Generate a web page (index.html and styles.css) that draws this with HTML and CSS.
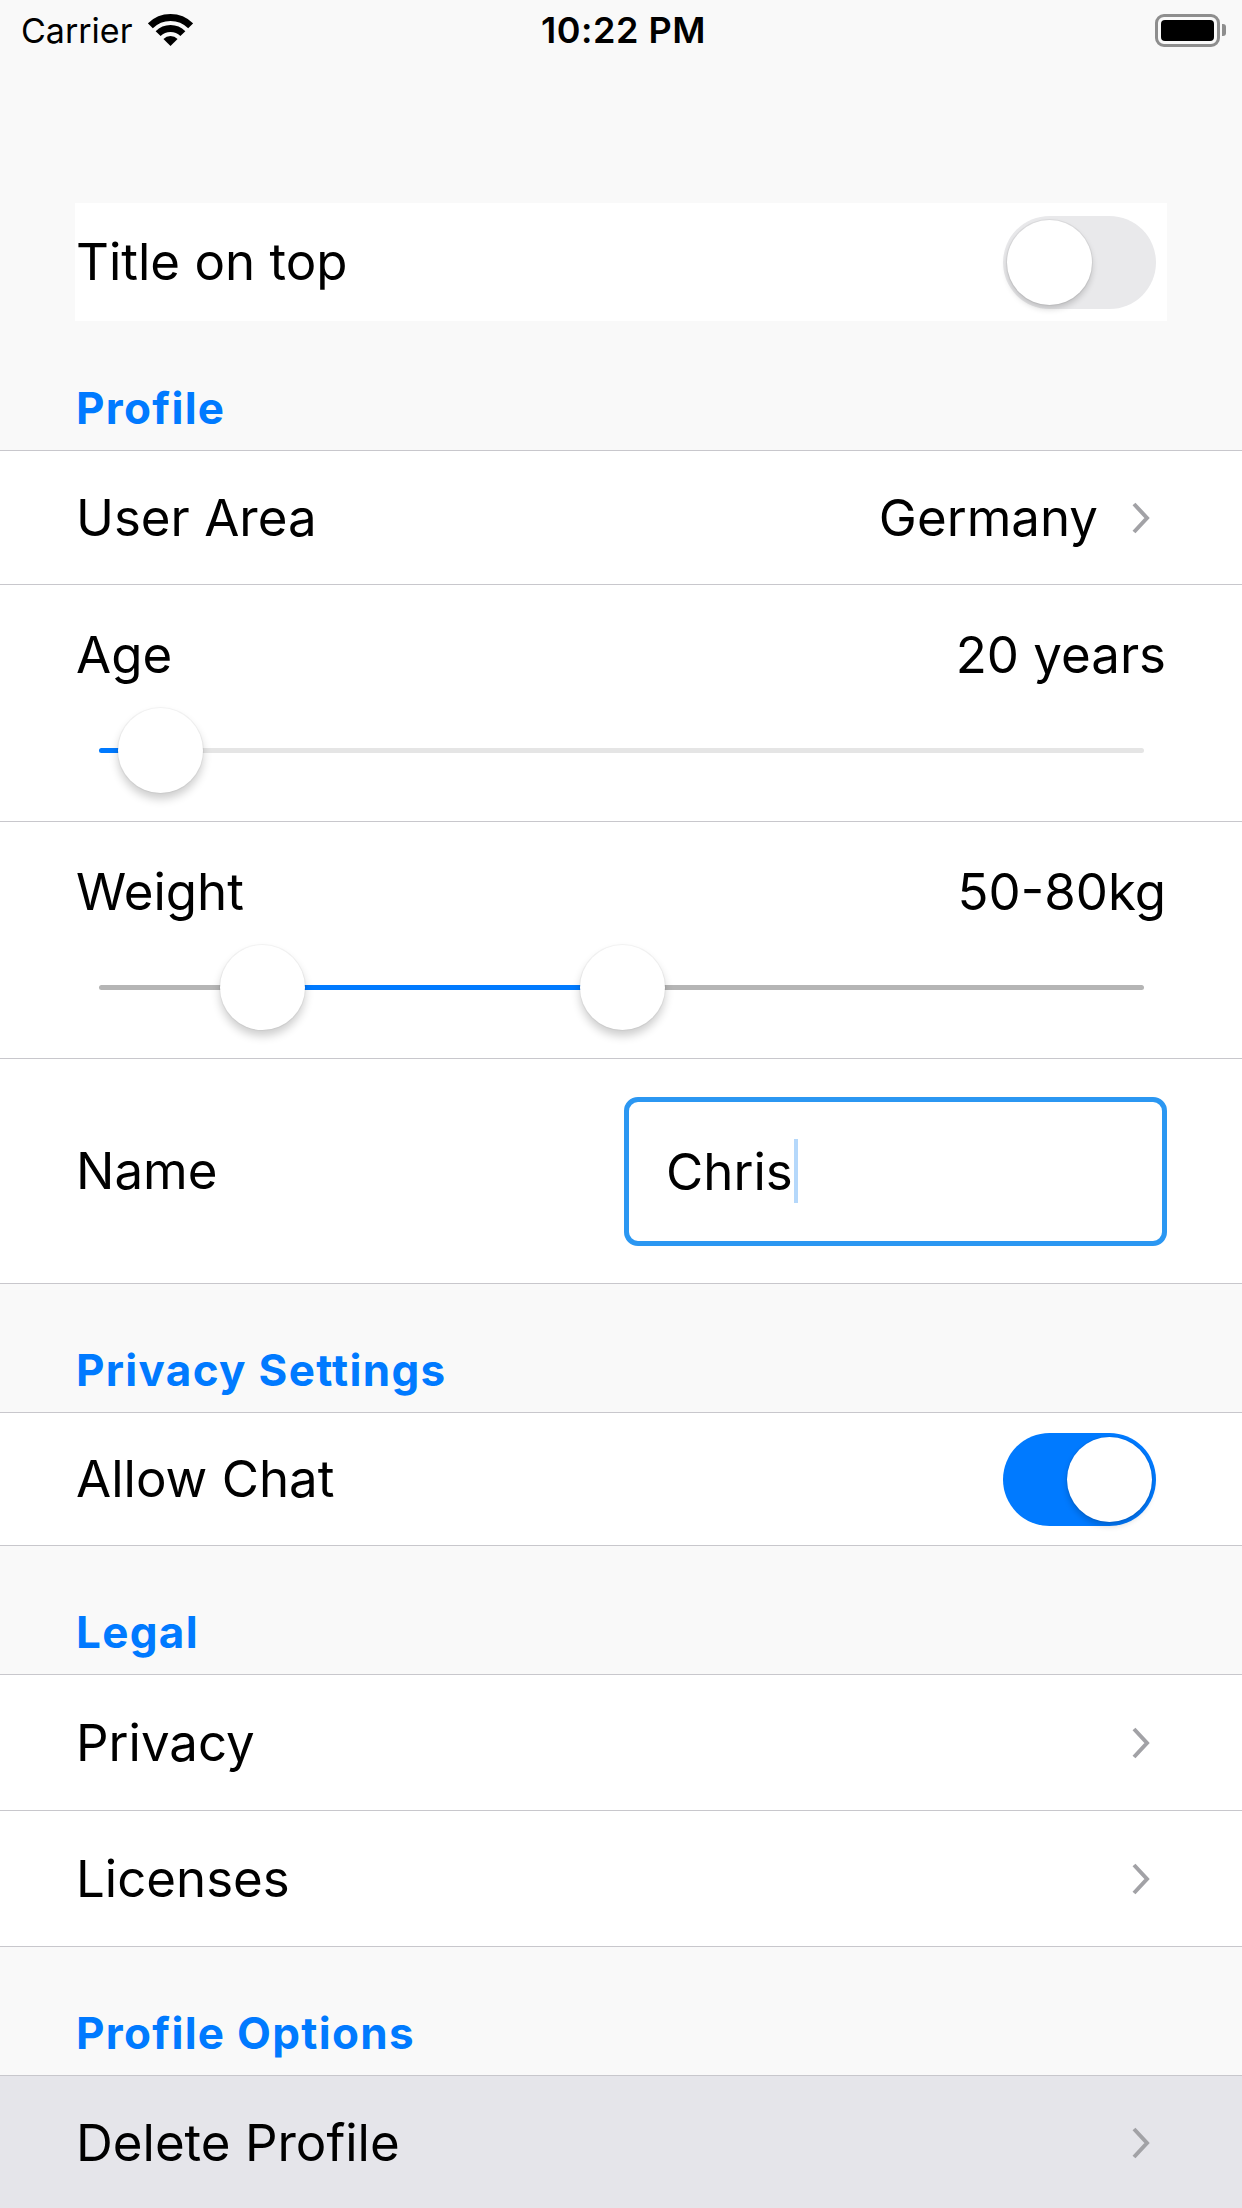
FILE: index.html
```html
<!DOCTYPE html>
<html lang="en">
<head>
    <meta charset="UTF-8">
    <meta name="viewport" content="width=device-width, initial-scale=1.0">
    <title>Settings</title>
    <link rel="stylesheet" href="styles.css">
</head>
<body>
    <div class="status">
        <div class="status-left">
            Carrier
            <svg class="wifi" width="45" height="33" viewBox="0 0 45 33">
                <path d="M2.35 11.85 A28.5 28.5 0 0 1 42.65 11.85" fill="none" stroke="#000" stroke-width="7"/>
                <path d="M10.13 19.63 A17.5 17.5 0 0 1 34.87 19.63" fill="none" stroke="#000" stroke-width="7"/>
                <path d="M22.5 32 L15.43 24.93 A10 10 0 0 1 29.57 24.93 Z" fill="#000"/>
            </svg>
        </div>
        <div class="status-time">10:22 PM</div>
        <div class="status-right">
            <div class="battery"><span class="battery-fill"></span></div>
            <span class="battery-nub"></span>
        </div>
    </div>

    <div class="card">
        <span class="label">Title on top</span>
        <span class="switch"><span class="knob"></span></span>
    </div>

    <div class="section-head first">Profile</div>
    <div class="row">
        <span class="label">User Area</span>
        <span class="value">Germany</span>
        <svg class="chevron" width="22" height="34" viewBox="0 0 22 34">
            <polyline points="4,3 17,17 4,31" fill="none" stroke="#a2a2a6" stroke-width="4"/>
        </svg>
    </div>

    <div class="slider-row">
        <div class="slider-head">
            <span class="label">Age</span>
            <span class="value">20 years</span>
        </div>
        <div class="track-wrap">
            <div class="track light"></div>
            <div class="fill" style="left: 0; width: 5.8%;"></div>
            <div class="thumb" style="left: 5.8%;"></div>
        </div>
    </div>

    <div class="slider-row">
        <div class="slider-head">
            <span class="label">Weight</span>
            <span class="value">50-80kg</span>
        </div>
        <div class="track-wrap">
            <div class="track"></div>
            <div class="fill" style="left: 15.6%; width: 34.4%;"></div>
            <div class="thumb" style="left: 15.6%;"></div>
            <div class="thumb" style="left: 50%;"></div>
        </div>
    </div>

    <div class="row name-row">
        <span class="label">Name</span>
        <div class="field">Chris<span class="caret"></span></div>
    </div>

    <div class="section-head">Privacy Settings</div>
    <div class="row short">
        <span class="label">Allow Chat</span>
        <span class="switch on"><span class="knob"></span></span>
    </div>

    <div class="section-head">Legal</div>
    <div class="row tall">
        <span class="label">Privacy</span>
        <svg class="chevron" width="22" height="34" viewBox="0 0 22 34">
            <polyline points="4,3 17,17 4,31" fill="none" stroke="#a2a2a6" stroke-width="4"/>
        </svg>
    </div>
    <div class="row tall">
        <span class="label">Licenses</span>
        <svg class="chevron" width="22" height="34" viewBox="0 0 22 34">
            <polyline points="4,3 17,17 4,31" fill="none" stroke="#a2a2a6" stroke-width="4"/>
        </svg>
    </div>

    <div class="section-head">Profile Options</div>
    <div class="row pressed">
        <span class="label">Delete Profile</span>
        <svg class="chevron" width="22" height="34" viewBox="0 0 22 34">
            <polyline points="4,3 17,17 4,31" fill="none" stroke="#a2a2a6" stroke-width="4"/>
        </svg>
    </div>
</body>
</html>
```

FILE: styles.css
```css
body {
    margin: 0;
    background: #f9f9f9;
    font-family: Inter, "Noto Sans", sans-serif;
    color: #000;
    font-size: 51px;
}
.status {
    height: 60px;
    display: grid;
    grid-template-columns: 1fr auto 1fr;
    align-items: center;
    padding: 0 16px 0 21px;
    font-size: 34px;
}
.status-left {
    display: flex;
    align-items: center;
    gap: 16px;
}
.status-time {
    font-size: 36px;
    font-weight: 600;
    letter-spacing: 0.5px;
}
.status-right {
    display: flex;
    align-items: center;
    justify-content: flex-end;
}
.battery {
    width: 65px;
    height: 33px;
    box-sizing: border-box;
    border: 3px solid #8e8e8e;
    border-radius: 9px;
    padding: 3px;
}
.battery-fill {
    display: block;
    height: 100%;
    background: #000;
    border-radius: 4px;
}
.battery-nub {
    width: 4px;
    height: 12px;
    margin-left: 2px;
    background: #8e8e8e;
    border-radius: 0 3px 3px 0;
}
.card {
    margin: 143px 75px 0;
    height: 118px;
    background: #fff;
    display: flex;
    align-items: center;
    justify-content: space-between;
    padding: 0 11px 0 1px;
}
.label {
    line-height: 60px;
}
.value {
    line-height: 60px;
}
.switch {
    position: relative;
    width: 153px;
    height: 93px;
    border-radius: 47px;
    background: #e9e9eb;
    flex-shrink: 0;
}
.switch .knob {
    position: absolute;
    top: 4px;
    left: 4px;
    width: 85px;
    height: 85px;
    border-radius: 50%;
    background: #fff;
    box-shadow: 0 4px 6px rgba(0, 0, 0, 0.18), 0 0 0 1px rgba(0, 0, 0, 0.05);
}
.switch.on {
    background: #007aff;
}
.switch.on .knob {
    left: 64px;
}
.section-head {
    height: 50px;
    padding: 61px 76px 17px 76px;
    line-height: 50px;
    font-size: 44px;
    font-weight: 700;
    letter-spacing: 1.3px;
    color: #007aff;
    border-bottom: 1px solid #c8c7cc;
}
.section-head.first {
    padding-top: 62px;
}
.row {
    height: 133px;
    display: flex;
    align-items: center;
    padding: 0 76px;
    background: #fff;
    border-bottom: 1px solid #c8c7cc;
}
.row.short {
    height: 132px;
}
.row.tall {
    height: 135px;
}
.row .label {
    flex: 1;
}
.row .switch {
    margin-right: 10px;
}
.chevron {
    margin-left: 32px;
    margin-right: 14px;
}
.row .label + .chevron {
    margin-left: 0;
}
.slider-row {
    height: 237px;
    box-sizing: border-box;
    padding: 0 76px;
    background: #fff;
    border-bottom: 1px solid #c8c7cc;
}
.slider-head {
    display: flex;
    justify-content: space-between;
    padding-top: 40px;
}
.track-wrap {
    position: relative;
    height: 90px;
    margin: 21px 22px 0 23px;
}
.track {
    position: absolute;
    left: 0;
    right: 0;
    top: 42px;
    height: 5px;
    border-radius: 3px;
    background: #b5b5b5;
}
.track.light {
    background: #e5e5e5;
}
.fill {
    position: absolute;
    top: 42px;
    height: 5px;
    border-radius: 3px;
    background: #007aff;
}
.thumb {
    position: absolute;
    top: 2px;
    width: 85px;
    height: 85px;
    margin-left: -42px;
    border-radius: 50%;
    background: #fff;
    box-shadow: 0 6px 10px rgba(0, 0, 0, 0.2), 0 0 0 1px rgba(0, 0, 0, 0.04);
}
.name-row {
    height: 224px;
    padding-right: 75px;
}
.field {
    width: 543px;
    height: 149px;
    box-sizing: border-box;
    border: 5px solid #2b97f2;
    border-radius: 14px;
    padding-left: 37px;
    display: flex;
    align-items: center;
}
.caret {
    width: 4px;
    height: 64px;
    margin-left: 1px;
    background: #b5d8fb;
}
.pressed {
    background: #e5e5ea;
}
```
